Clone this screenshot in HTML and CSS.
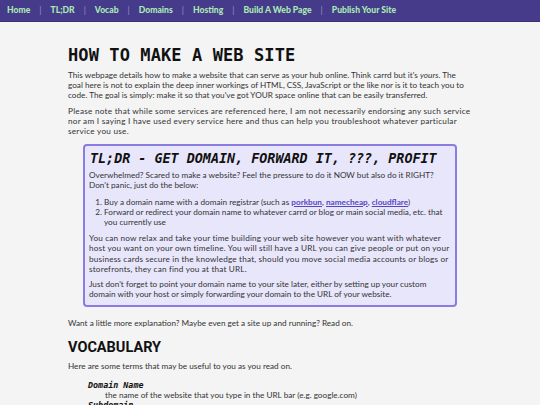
FILE: index.html
```html
<!DOCTYPE html>
<html>
<head>
<meta charset="utf-8">
<link rel="stylesheet" href="styles.css">
</head>
<body>
<nav class="nav">
  <a href="#">Home</a><span class="sep">|</span>
  <a href="#">TL;DR</a><span class="sep">|</span>
  <a href="#">Vocab</a><span class="sep">|</span>
  <a href="#">Domains</a><span class="sep">|</span>
  <a href="#">Hosting</a><span class="sep">|</span>
  <a href="#">Build A Web Page</a><span class="sep">|</span>
  <a href="#">Publish Your Site</a>
</nav>
<main class="main">
  <h1 class="title">HOW TO MAKE A WEB SITE</h1>
  <p>This webpage details how to make a website that can serve as your hub online. Think carrd but it's <em>yours</em>. The goal here is not to explain the deep inner workings of HTML, CSS, JavaScript or the like nor is it to teach you to code. The goal is simply: make it so that you've got YOUR space online that can be easily transferred.</p>
  <p class="wide">Please note that while some services are referenced here, I am not necessarily endorsing any such service nor am I saying I have used every service here and thus can help you troubleshoot whatever particular service you use.</p>
  <section class="tldr">
    <h2 class="tldr-title">TL;DR - GET DOMAIN, FORWARD IT, ???, PROFIT</h2>
    <p>Overwhelmed? Scared to make a website? Feel the pressure to do it NOW but also do it RIGHT? Don't panic, just do the below:</p>
    <ol class="steps">
      <li>Buy a domain name with a domain registrar (such as <a href="#">porkbun</a>, <a href="#">namecheap</a>, <a href="#">cloudflare</a>)</li>
      <li>Forward or redirect your domain name to whatever carrd or blog or main social media, etc. that you currently use</li>
    </ol>
    <p class="spread">You can now relax and take your time building your web site however you want with whatever host you want on your own timeline. You will still have a URL you can give people or put on your business cards secure in the knowledge that, should you move social media accounts or blogs or storefronts, they can find you at that URL.</p>
    <p>Just don't forget to point your domain name to your site later, either by setting up your custom domain with your host or simply forwarding your domain to the URL of your website.</p>
  </section>
  <p>Want a little more explanation? Maybe even get a site up and running? Read on.</p>
  <h2 class="section-title">VOCABULARY</h2>
  <p>Here are some terms that may be useful to you as you read on.</p>
  <dl class="vocab">
    <dt>Domain Name</dt>
    <dd>the name of the website that you type in the URL bar (e.g. google.com)</dd>
    <dt>Subdomain</dt>
    <dd>a part of a domain name</dd>
  </dl>
</main>
</body>
</html>
```
FILE: styles.css
```css
html, body {
  margin: 0;
  padding: 0;
}
body {
  background: #f4f4f4;
  color: #333;
  font-family: Lato, "Liberation Sans", sans-serif;
  font-size: 8.2px;
  line-height: 10.2px;
  height: 405px;
  overflow: hidden;
}
.nav {
  background: #463b8a;
  border-bottom: 1px solid #3a3075;
  height: 21px;
  display: flex;
  align-items: center;
  padding: 0 7px;
  font-family: Lato, sans-serif;
  font-weight: 900;
  font-size: 8.6px;
}
.nav a {
  color: #a9e8b3;
  text-decoration: none;
}
.sep {
  color: #9a92c8;
  margin: 0 9px;
  font-weight: 400;
}
.main {
  width: 404px;
  margin: 0 auto;
  padding-top: 23px;
}
.title {
  font-family: "DejaVu Sans Mono", monospace;
  font-weight: bold;
  font-size: 17px;
  line-height: 20px;
  color: #111;
  margin: 0 0 5px;
  letter-spacing: 0.1px;
}
p {
  margin: 0 0 5px;
}
.wide {
  letter-spacing: 0.25px;
}
.tldr {
  margin: 8px 15px 11px;
  background: #e8e6fb;
  border: 2px solid #8a7ce0;
  border-radius: 4px;
  padding: 3px 4px 1px;
}
.tldr-title {
  font-family: "DejaVu Sans Mono", monospace;
  font-style: italic;
  font-weight: bold;
  font-size: 13.4px;
  line-height: 16px;
  color: #111;
  margin: 2px 0 3px 1px;
}
.spread {
  letter-spacing: 0.18px;
}
.steps {
  margin: 6px 0 6px;
  padding-left: 15px;
}
.steps a {
  color: #5646c4;
  font-weight: bold;
}
.section-title {
  font-family: Roboto, "Liberation Sans", sans-serif;
  font-weight: bold;
  font-size: 14.5px;
  line-height: 17px;
  color: #111;
  margin: 10px 0 5px;
}
.vocab {
  margin: 9px 0 0 20px;
}
.vocab dt {
  font-family: "DejaVu Sans Mono", monospace;
  font-style: italic;
  font-weight: bold;
  font-size: 8.4px;
  color: #111;
}
.vocab dd {
  margin-left: 17px;
}
```
